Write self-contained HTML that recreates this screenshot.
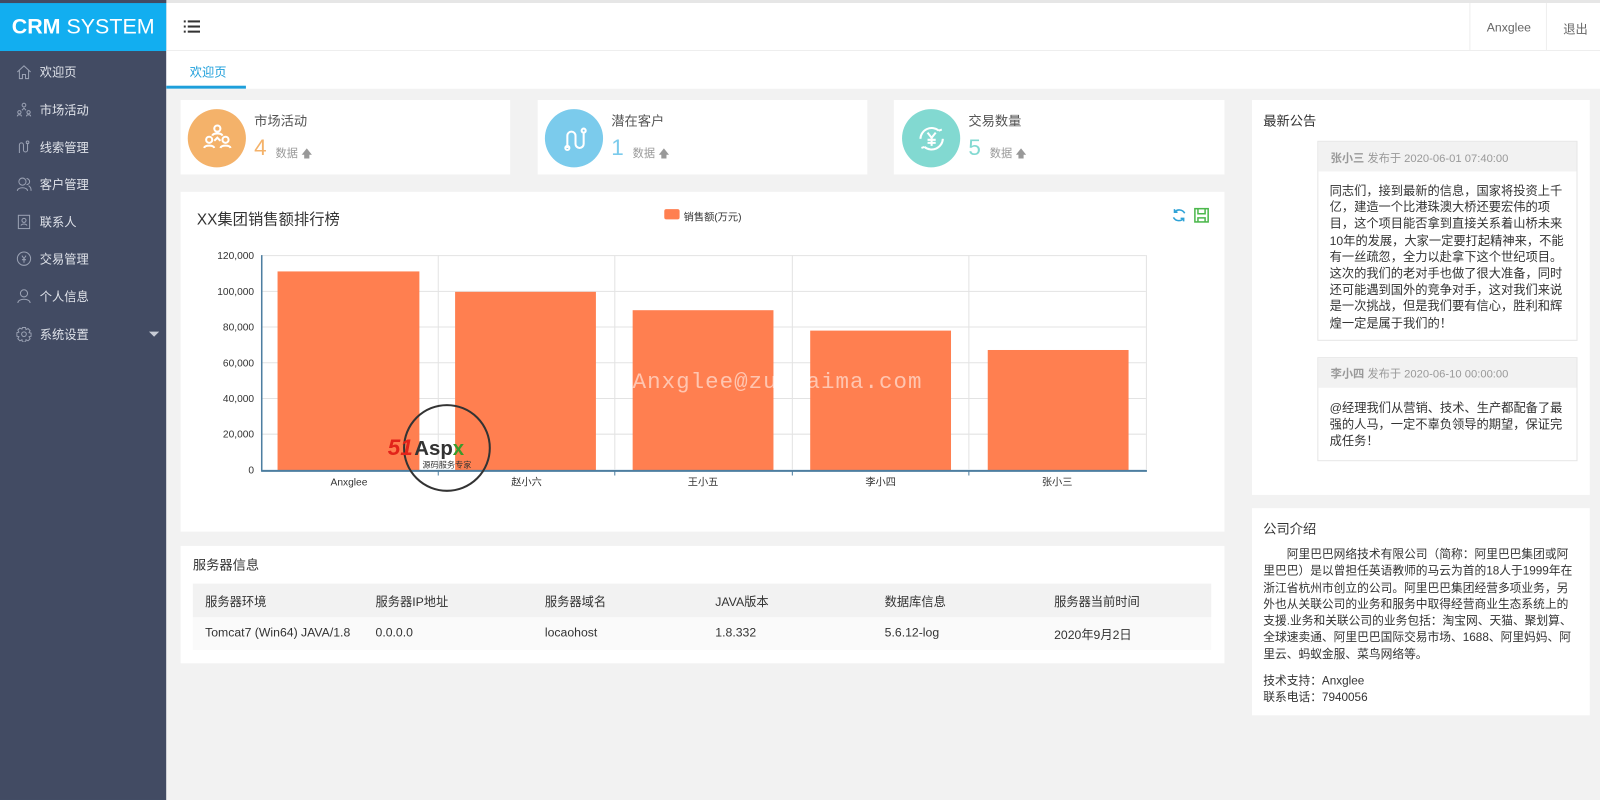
<!DOCTYPE html>
<html><head><meta charset="utf-8">
<style>
*{margin:0;padding:0;box-sizing:border-box}
html,body{width:1600px;height:784px;overflow:hidden;background:#fff}
body{font-family:"Liberation Sans","Noto Sans CJK SC",sans-serif;font-size:12px;color:#333}
#wrap{position:absolute;left:0;top:0;width:1568px;height:768px;transform:scale(1.0204);transform-origin:0 0}
.abs{position:absolute}
.side{left:0;top:0;width:163px;height:784px;background:#424b63}
.logo{left:0;top:3px;width:163px;height:47px;background:#12aef0;color:#fff;font-size:21px;line-height:47px;text-align:center}
.nav{left:0;width:163px;height:36px;color:#e0e3ea;font-size:12px;line-height:36px}
.nav span{position:absolute;left:39px}
.nav svg{position:absolute;left:16px;top:10px}
.main{left:163px;top:87px;width:1405px;height:697px;background:#f2f2f2}
.card{background:#fff}
.t{position:absolute;white-space:nowrap}
</style></head><body><div id="wrap">
<div class="abs" style="left:0;top:0;width:1568px;height:3px;background:#e6e6e6"></div>
<div class="abs side"></div>
<div class="abs logo"><b>CRM</b> SYSTEM</div>
<div class="abs" style="left:163px;top:3px;width:1405px;height:47px;background:#fff;border-bottom:1px solid #eee"></div>
<svg class="abs" style="left:180px;top:19px" width="16" height="14" viewBox="0 0 16 14"><g fill="#333"><rect x="0" y="1" width="2" height="2"/><rect x="4" y="1" width="12" height="2"/><rect x="0" y="6" width="2" height="2"/><rect x="4" y="6" width="12" height="2"/><rect x="0" y="11" width="2" height="2"/><rect x="4" y="11" width="12" height="2"/></g></svg>
<div class="abs" style="left:1440px;top:3px;width:1px;height:47px;background:#eee"></div>
<div class="abs" style="left:1515px;top:3px;width:1px;height:47px;background:#eee"></div>
<div class="t" style="left:1457px;top:20px;color:#666">Anxglee</div>
<div class="t" style="left:1532px;top:20px;color:#666">退出</div>
<div class="abs" style="left:163px;top:50px;width:1405px;height:37px;background:#fff"></div>
<div class="t" style="left:186px;top:62px;color:#1e9fdb">欢迎页</div>
<div class="abs" style="left:163px;top:84px;width:78px;height:3px;background:#1e9fdb"></div>
<div class="abs nav" style="top:53px"><svg width="15" height="15" viewBox="0 0 15 15" fill="none" stroke="#9aa1b3"><path d="M1 7.5L7.5 1.5 14 7.5M3 6v8h3v-4h3v4h3V6"/></svg><span>欢迎页</span></div>
<div class="abs nav" style="top:90px"><svg width="15" height="15" viewBox="0 0 15 15" fill="none" stroke="#9aa1b3"><circle cx="7.5" cy="3" r="1.8"/><circle cx="3" cy="10" r="1.6"/><circle cx="12" cy="10" r="1.6"/><path d="M1 14c0-2 4-2 4 0M10 14c0-2 4-2 4 0M5.5 8l2-2 2 2"/></svg><span>市场活动</span></div>
<div class="abs nav" style="top:127px"><svg width="15" height="15" viewBox="0 0 15 15" fill="none" stroke="#9aa1b3"><path d="M3 13V5a2 2 0 0 1 4 0v5a2 2 0 0 0 4 0V3"/><circle cx="11" cy="2.5" r="1.3"/></svg><span>线索管理</span></div>
<div class="abs nav" style="top:163px"><svg width="15" height="15" viewBox="0 0 15 15" fill="none" stroke="#9aa1b3"><circle cx="6" cy="5" r="3.5"/><path d="M1 14c0-4 10-4 10 0M10 2a3 3 0 0 1 0 6M12 9c2 1 2.5 3 2.5 5"/></svg><span>客户管理</span></div>
<div class="abs nav" style="top:200px"><svg width="15" height="15" viewBox="0 0 15 15" fill="none" stroke="#9aa1b3"><rect x="2" y="1" width="11" height="13"/><circle cx="7.5" cy="6" r="2"/><path d="M4.5 11c1-2 5-2 6 0"/></svg><span>联系人</span></div>
<div class="abs nav" style="top:236px"><svg width="15" height="15" viewBox="0 0 15 15" fill="none" stroke="#9aa1b3"><circle cx="7.5" cy="7.5" r="6.5"/><path d="M5.5 4.5l2 3 2-3M7.5 7.5v4M5.5 8.5h4"/></svg><span>交易管理</span></div>
<div class="abs nav" style="top:273px"><svg width="15" height="15" viewBox="0 0 15 15" fill="none" stroke="#9aa1b3"><circle cx="7.5" cy="4.5" r="3.5"/><path d="M1.5 14c0-5 12-5 12 0"/></svg><span>个人信息</span></div>
<div class="abs nav" style="top:310px"><svg width="15" height="15" viewBox="0 0 15 15" fill="none" stroke="#9aa1b3"><circle cx="7.5" cy="7.5" r="2.3"/><path d="M6 1h3l.5 2 2-1 2 2-1 2 2 .5v3l-2 .5 1 2-2 2-2-1-.5 2H6l-.5-2-2 1-2-2 1-2-2-.5V6l2-.5-1-2 2-2 2 1z"/></svg><span>系统设置</span></div>
<div class="abs" style="left:146px;top:325px;width:0;height:0;border-left:5px solid transparent;border-right:5px solid transparent;border-top:5px solid #c8ccd6"></div>
<div class="abs main"></div>
<div class="abs card" style="left:177px;top:98px;width:323px;height:73px"></div>
<div class="abs card" style="left:527px;top:98px;width:323px;height:73px"></div>
<div class="abs card" style="left:876px;top:98px;width:324px;height:73px"></div>
<div class="abs" style="left:184px;top:107px;width:57px;height:57px;border-radius:50%;background:#f4b26a"></div>
<svg class="abs" style="left:197px;top:119px" width="32" height="32" viewBox="0 0 32 32" fill="none" stroke="#fff" stroke-width="2"><circle cx="16" cy="7" r="3"/><path d="M11 14c1-3 9-3 10 0"/><circle cx="8" cy="18" r="3"/><circle cx="24" cy="18" r="3"/><path d="M3 26c1-3 9-3 10 0M19 26c1-3 9-3 10 0M13 19l3-3 3 3"/></svg>
<div class="abs" style="left:534px;top:107px;width:57px;height:57px;border-radius:50%;background:#7bcbec"></div>
<svg class="abs" style="left:548px;top:121px" width="30" height="30" viewBox="0 0 30 30" fill="none" stroke="#fff" stroke-width="2"><path d="M8 24V12a4 4 0 0 1 8 0v8a4 4 0 0 0 8 0V9"/><circle cx="8" cy="24" r="2"/><circle cx="24" cy="7" r="2"/></svg>
<div class="abs" style="left:884px;top:107px;width:57px;height:57px;border-radius:50%;background:#82d9d1"></div>
<svg class="abs" style="left:897px;top:120px" width="32" height="32" viewBox="0 0 32 32" fill="none" stroke="#fff" stroke-width="2"><path d="M27 16a11 11 0 0 1-18 8M5 16a11 11 0 0 1 18-8M9 24l-3 1M23 8l3-1"/><path d="M12 10l4 5 4-5M16 15v8M12 17h8M12 20h8"/></svg>
<div class="t" style="left:249px;top:108px;font-size:13px;color:#555">市场活动</div>
<div class="t" style="left:249px;top:132px;font-size:22px;color:#f4b26a">4</div>
<div class="t" style="left:270px;top:142px;font-size:11px;color:#999">数据 &#129093;</div>
<div class="t" style="left:599px;top:108px;font-size:13px;color:#555">潜在客户</div>
<div class="t" style="left:599px;top:132px;font-size:22px;color:#7bcbec">1</div>
<div class="t" style="left:620px;top:142px;font-size:11px;color:#999">数据 &#129093;</div>
<div class="t" style="left:949px;top:108px;font-size:13px;color:#555">交易数量</div>
<div class="t" style="left:949px;top:132px;font-size:22px;color:#82d9d1">5</div>
<div class="t" style="left:970px;top:142px;font-size:11px;color:#999">数据 &#129093;</div>
<div class="abs card" style="left:177px;top:188px;width:1023px;height:333px"></div>
<div class="t" style="left:193px;top:204px;font-size:15px;color:#333">XX集团销售额排行榜</div>
<div class="abs" style="left:651px;top:205px;width:15px;height:10px;background:#ff7f50;border-radius:2px"></div>
<div class="t" style="left:670px;top:204px;font-size:10px;color:#333">销售额(万元)</div>
<svg class="abs" style="left:1148px;top:203px" width="40" height="17" viewBox="0 0 40 17" fill="none" stroke-width="1.5"><path d="M13 6a6 6 0 0 0-10-1M3 2v3h3M2 10a6 6 0 0 0 10 1M12 14v-3H9" stroke="#2ea2d6"/><rect x="23" y="1.5" width="13" height="13" stroke="#4cb84c"/><path d="M26 1.5v5h7v-5M26 14.5v-4h7v4" stroke="#4cb84c"/></svg>
<svg class="abs" style="left:177px;top:240px" width="1023" height="240" font-family="Liberation Sans, sans-serif" font-size="10" fill="#333">
<g stroke="#e3e3e3" stroke-width="1">
<line x1="79" y1="10.5" x2="946" y2="10.5"/><line x1="79" y1="45.5" x2="946" y2="45.5"/><line x1="79" y1="80.5" x2="946" y2="80.5"/><line x1="79" y1="115.5" x2="946" y2="115.5"/><line x1="79" y1="150.5" x2="946" y2="150.5"/><line x1="79" y1="185.5" x2="946" y2="185.5"/>
<line x1="252.5" y1="10" x2="252.5" y2="220"/><line x1="425.5" y1="10" x2="425.5" y2="220"/><line x1="599.5" y1="10" x2="599.5" y2="220"/><line x1="772.5" y1="10" x2="772.5" y2="220"/><line x1="946.5" y1="10" x2="946.5" y2="220"/>
</g>
<g fill="#ff7f50">
<rect x="95" y="26" width="139" height="195"/><rect x="269" y="46" width="138" height="175"/><rect x="443" y="64" width="138" height="157"/><rect x="617" y="84" width="138" height="137"/><rect x="791" y="103" width="138" height="118"/>
</g>
<line x1="79.5" y1="10" x2="79.5" y2="222" stroke="#4d7ea0" stroke-width="1.5"/>
<line x1="79" y1="221.5" x2="947" y2="221.5" stroke="#4d7ea0" stroke-width="2"/>
<g stroke="#4d7ea0"><line x1="252.5" y1="222" x2="252.5" y2="226"/><line x1="425.5" y1="222" x2="425.5" y2="226"/><line x1="599.5" y1="222" x2="599.5" y2="226"/><line x1="772.5" y1="222" x2="772.5" y2="226"/></g>
<g text-anchor="end"><text x="72" y="14">120,000</text><text x="72" y="49">100,000</text><text x="72" y="84">80,000</text><text x="72" y="119">60,000</text><text x="72" y="154">40,000</text><text x="72" y="189">20,000</text><text x="72" y="224">0</text></g>
<g text-anchor="middle"><text x="165" y="236">Anxglee</text><text x="339" y="236" font-family="Liberation Sans, Noto Sans CJK SC, sans-serif">赵小六</text><text x="512" y="236" font-family="Liberation Sans, Noto Sans CJK SC, sans-serif">王小五</text><text x="686" y="236" font-family="Liberation Sans, Noto Sans CJK SC, sans-serif">李小四</text><text x="859" y="236" font-family="Liberation Sans, Noto Sans CJK SC, sans-serif">张小三</text></g>
</svg>
<div class="t" style="left:620px;top:362px;font-family:'Liberation Mono',monospace;font-size:22px;color:rgba(255,255,255,0.55);letter-spacing:1px">Anxglee@zuidaima.com</div>
<svg class="abs" style="left:378px;top:395px" width="126" height="90" viewBox="0 0 126 90"><circle cx="60" cy="44" r="42" fill="none" stroke="#333" stroke-width="2"/><text x="2" y="51" font-family="Liberation Sans,sans-serif" font-weight="bold" font-style="italic" font-size="22" fill="#e2231a">51</text><text x="28" y="51" font-family="Liberation Sans,sans-serif" font-weight="bold" font-size="20" fill="#333">Asp<tspan fill="#3a9a2a">x</tspan></text><text x="36" y="63" font-family="Noto Sans CJK SC,sans-serif" font-size="8" fill="#333">源码服务专家</text></svg>
<div class="abs card" style="left:177px;top:535px;width:1023px;height:115px"></div>
<div class="t" style="left:189px;top:543px;font-size:13px;color:#333">服务器信息</div>
<div class="abs" style="left:189px;top:572px;width:998px;height:33px;background:#f2f2f2"></div>
<div class="abs" style="left:189px;top:605px;width:998px;height:32px;background:#fafafa"></div>
<div class="t" style="left:201px;top:581px">服务器环境</div><div class="t" style="left:368px;top:581px">服务器IP地址</div><div class="t" style="left:534px;top:581px">服务器域名</div><div class="t" style="left:701px;top:581px">JAVA版本</div><div class="t" style="left:867px;top:581px">数据库信息</div><div class="t" style="left:1033px;top:581px">服务器当前时间</div>
<div class="t" style="left:201px;top:613px">Tomcat7 (Win64) JAVA/1.8</div><div class="t" style="left:368px;top:613px">0.0.0.0</div><div class="t" style="left:534px;top:613px">locaohost</div><div class="t" style="left:701px;top:613px">1.8.332</div><div class="t" style="left:867px;top:613px">5.6.12-log</div><div class="t" style="left:1033px;top:613px">2020年9月2日</div>
<div class="abs card" style="left:1227px;top:98px;width:331px;height:387px"></div>
<div class="t" style="left:1238px;top:108px;font-size:13px;color:#333">最新公告</div>
<div class="abs" style="left:1291px;top:138px;width:255px;height:196px;border:1px solid #e6e6e6;background:#fff"></div>
<div class="abs" style="left:1292px;top:139px;width:253px;height:29px;background:#f2f2f2"></div>
<div class="t" style="left:1304px;top:147px;font-size:11px;color:#999"><b>张小三</b> 发布于 2020-06-01 07:40:00</div>
<div class="abs" style="left:1303px;top:179px;width:230px;font-size:12px;line-height:16.2px;color:#333">同志们，接到最新的信息，国家将投资上千亿，建造一个比港珠澳大桥还要宏伟的项目，这个项目能否拿到直接关系着山桥未来10年的发展，大家一定要打起精神来，不能有一丝疏忽，全力以赴拿下这个世纪项目。这次的我们的老对手也做了很大准备，同时还可能遇到国外的竞争对手，这对我们来说是一次挑战，但是我们要有信心，胜利和辉煌一定是属于我们的！</div>
<div class="abs" style="left:1291px;top:350px;width:255px;height:102px;border:1px solid #e6e6e6;background:#fff"></div>
<div class="abs" style="left:1292px;top:351px;width:253px;height:29px;background:#f2f2f2"></div>
<div class="t" style="left:1304px;top:358px;font-size:11px;color:#999"><b>李小四</b> 发布于 2020-06-10 00:00:00</div>
<div class="abs" style="left:1303px;top:392px;width:230px;font-size:12px;line-height:16.2px;color:#333">@经理我们从营销、技术、生产都配备了最强的人马，一定不辜负领导的期望，保证完成任务！</div>
<div class="abs card" style="left:1227px;top:498px;width:331px;height:203px"></div>
<div class="t" style="left:1238px;top:508px;font-size:13px;color:#333">公司介绍</div>
<div class="abs" style="left:1238px;top:536px;width:310px;font-size:11.5px;line-height:16.3px;color:#333;text-indent:2em">阿里巴巴网络技术有限公司（简称：阿里巴巴集团或阿里巴巴）是以曾担任英语教师的马云为首的18人于1999年在浙江省杭州市创立的公司。阿里巴巴集团经营多项业务，另外也从关联公司的业务和服务中取得经营商业生态系统上的支援.业务和关联公司的业务包括：淘宝网、天猫、聚划算、全球速卖通、阿里巴巴国际交易市场、1688、阿里妈妈、阿里云、蚂蚁金服、菜鸟网络等。</div>
<div class="t" style="left:1238px;top:659px;font-size:11.5px">技术支持：Anxglee</div>
<div class="t" style="left:1238px;top:675px;font-size:11.5px">联系电话：7940056</div>
</div></body></html>
